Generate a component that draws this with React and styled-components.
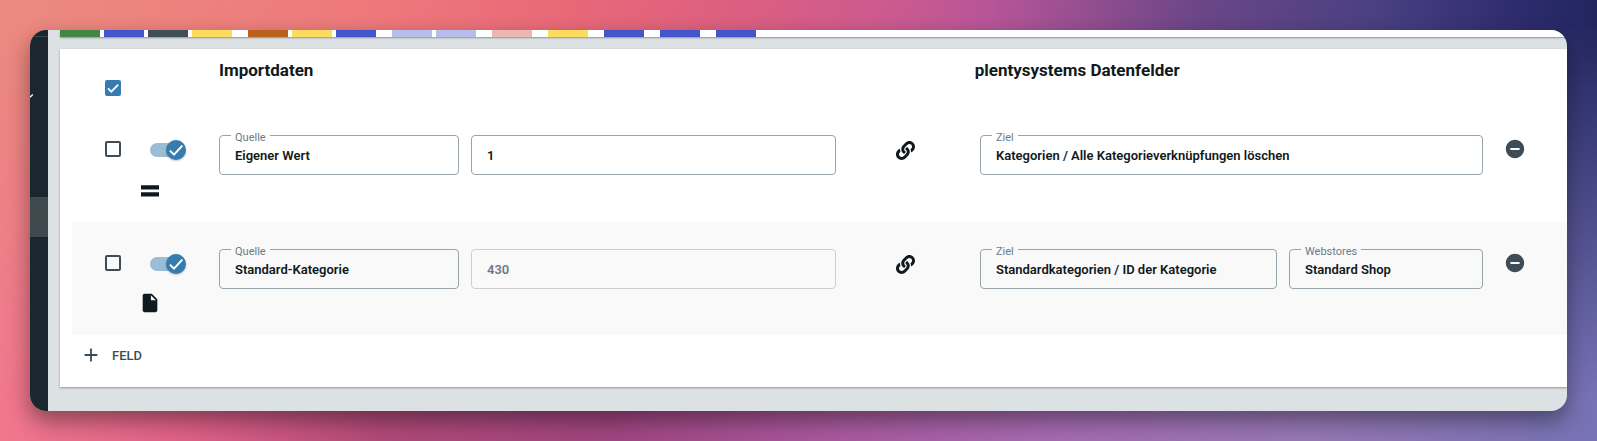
import React, { useState } from 'react'
import styled, { createGlobalStyle } from 'styled-components'
import { FaLink } from 'react-icons/fa'
import { MdAdd, MdInsertDriveFile, MdRemoveCircle } from 'react-icons/md'

const colors = {
  text: '#0f1a20',
  muted: '#6b7b84',
  icon: '#3f4c55',
  blue: '#367cae',
  track: '#9abdd6',
  border: '#98a4ac',
  borderDisabled: '#c8cfd3',
  surface: '#dce1e3',
}

const GlobalStyle = createGlobalStyle`
  * {
    box-sizing: border-box;
  }

  body {
    margin: 0;
    font-family: Roboto, 'Liberation Sans', sans-serif;
    color: ${colors.text};
  }
`

const Backdrop = styled.div`
  position: relative;
  isolation: isolate;
  min-height: 100vh;
  padding: 30px;
  background: linear-gradient(
    90deg,
    #ec8a80 0%,
    #ee7a7b 22%,
    #e86878 36%,
    #dc5f80 46%,
    #cb5a90 56%,
    #b75598 62%,
    #6b4687 75%,
    #4a4082 86%,
    #2e2c6e 95%,
    #21265f 100%
  );

  /* second gradient, faded in towards the bottom edge */
  &::before {
    content: '';
    position: absolute;
    inset: 0;
    z-index: -1;
    background: linear-gradient(
      90deg,
      #f0788d 0%,
      #df6088 12%,
      #b04a78 24%,
      #a04580 38%,
      #a95a9f 53%,
      #a56bb0 66%,
      #9678b4 82%,
      #7672b4 100%
    );
    mask-image: linear-gradient(180deg, transparent 5%, #000 90%);
  }
`

const Window = styled.div`
  display: flex;
  overflow: hidden;
  border-radius: 16px;
  background: ${colors.surface};
  box-shadow: 0 10px 22px rgba(0, 0, 0, 0.4);
`

const Sidebar = styled.nav`
  display: flex;
  flex-direction: column;
  flex: 0 0 18px;
  background: #1b272e;
`

const SidebarTop = styled.div`
  height: 7px;
  border-bottom: 1px solid #3b464c;
`

const SidebarGroup = styled.div`
  height: 160px;
  padding-top: 57px;

  & svg {
    display: block;
  }
`

const SidebarActive = styled.div`
  height: 40px;
  background: #3f494e;
`

const Main = styled.main`
  flex: 1;
  min-width: 0;
  padding: 0 0 24px 12px;
`

const ChipBar = styled.div`
  display: flex;
  gap: 16px;
  height: 7px;
  margin-bottom: 12px;
  background: #fff;
  box-shadow: 0 1px 2px rgba(0, 0, 0, 0.35);
`

const ChipGroup = styled.div`
  display: flex;
  gap: 4px;
`

const Chip = styled.span`
  width: 40px;
  background: ${props => props.$color};
`

const Card = styled.section`
  padding: 0 0 12px 12px;
  background: #fff;
  box-shadow: 0 1px 2px rgba(0, 0, 0, 0.35);
`

const Header = styled.header`
  display: grid;
  grid-template-columns: 36px 78px 614fr 139px 506fr 84px;
  height: 59px;
  padding: 11px 0 0 33px;
`

const HeaderCheck = styled.div`
  padding-top: 20px;
`

const Title = styled.h2`
  margin: 0;
  font-size: 17px;
  line-height: 20px;
  font-weight: 700;
  white-space: nowrap;
`

const Row = styled.div`
  display: grid;
  grid-template-columns: 36px 78px 617fr 144px 503fr 84px;
  height: ${props => (props.$shaded ? 113 : 114)}px;
  padding: 27px 0 0 33px;
  background: ${props => (props.$shaded ? '#f9f9f9' : '#fff')};
`

const RowCheck = styled.div`
  padding-top: 6px;
`

const Status = styled.div`
  display: flex;
  flex-direction: column;
  gap: 20px;
  padding-top: 5px;
`

const ToggleSlot = styled.div`
  padding-left: 9px;
`

const TypeIcon = styled.div`
  display: flex;
  align-items: center;
  justify-content: center;
  width: 18px;
  height: ${props => (props.$type === 'value' ? 22 : 18)}px;

  & svg {
    flex: none;
  }
`

const CheckLabel = styled.label`
  display: grid;
  width: 16px;
  height: 16px;

  & > * {
    grid-area: 1 / 1;
  }

  & svg {
    pointer-events: none;
  }
`

const CheckInput = styled.input`
  appearance: none;
  width: 16px;
  height: 16px;
  margin: 0;
  border: 2px solid ${colors.icon};
  border-radius: 2px;
  cursor: pointer;

  &:checked {
    border-color: ${colors.blue};
    background: ${colors.blue};
  }
`

const ToggleLabel = styled.label`
  display: grid;
  align-items: center;
  width: 36px;
  height: 20px;

  & > * {
    grid-area: 1 / 1;
  }
`

const ToggleInput = styled.input`
  appearance: none;
  width: 34px;
  height: 14px;
  margin: 0;
  border-radius: 7px;
  background: ${colors.borderDisabled};
  cursor: pointer;

  &:checked {
    background: ${colors.track};
  }
`

const Knob = styled.span`
  display: flex;
  align-items: center;
  justify-content: center;
  justify-self: ${props => (props.$on ? 'end' : 'start')};
  width: 20px;
  height: 20px;
  border-radius: 50%;
  background: ${props => (props.$on ? colors.blue : '#fff')};
  box-shadow: 0 1px 2px rgba(0, 0, 0, 0.25);
  pointer-events: none;
`

const Fields = styled.div`
  display: flex;
  gap: 12px;
`

const FieldBox = styled.div`
  position: relative;
  flex: ${props => props.$grow} 1 0;
  min-width: 0;
`

const FieldLabel = styled.label`
  position: absolute;
  top: -4px;
  left: 12px;
  padding: 0 4px;
  background: ${props => (props.$shaded ? '#f9f9f9' : '#fff')};
  color: ${colors.muted};
  font-size: 11px;
  line-height: 14px;
`

const FieldInput = styled.input`
  display: block;
  width: 100%;
  height: 40px;
  padding: 0 15px;
  border: 1px solid ${colors.border};
  border-radius: 4px;
  background: transparent;
  color: ${colors.text};
  font-family: inherit;
  font-size: 13px;
  font-weight: 600;

  &:disabled {
    border-color: ${colors.borderDisabled};
    color: ${colors.muted};
  }
`

const LinkSlot = styled.div`
  display: flex;
  justify-content: center;
  padding: 6px 6px 0 0;
`

const RemoveButton = styled.button`
  align-self: start;
  width: 22px;
  height: 22px;
  margin: 3px 0 0 21px;
  padding: 0;
  border: 0;
  background: none;
  color: ${colors.icon};
  cursor: pointer;
`

const AddButton = styled.button`
  display: flex;
  align-items: center;
  gap: 10px;
  height: 40px;
  padding: 0 8px;
  border: 0;
  background: none;
  color: ${colors.icon};
  font-family: inherit;
  font-size: 13px;
  font-weight: 500;
  cursor: pointer;
`

const chips = [
  ['#448744', '#4355cb', '#404e57', '#fbdb60'],
  ['#b9621b', '#fbdb60', '#4355cb'],
  ['#b7bdeb', '#b7bdeb'],
  ['#ebb7b5'],
  ['#fbdb60'],
  ['#4355cb'],
  ['#4355cb'],
  ['#4355cb'],
]

const mappings = [
  {
    id: 'own',
    type: 'value',
    source: [
      { label: 'Quelle', value: 'Eigener Wert', grow: 240 },
      { name: 'Wert', value: '1', grow: 365 },
    ],
    target: [{ label: 'Ziel', value: 'Kategorien / Alle Kategorieverknüpfungen löschen', grow: 1 }],
  },
  {
    id: 'category',
    type: 'file',
    shaded: true,
    source: [
      { label: 'Quelle', value: 'Standard-Kategorie', grow: 240 },
      { name: 'Wert', value: '430', grow: 365, disabled: true },
    ],
    target: [
      { label: 'Ziel', value: 'Standardkategorien / ID der Kategorie', grow: 297 },
      { label: 'Webstores', value: 'Standard Shop', grow: 194 },
    ],
  },
]

const Checkbox = ({ label, defaultChecked = false }) => {
  const [checked, setChecked] = useState(defaultChecked)
  return (
    <CheckLabel>
      <CheckInput
        type="checkbox"
        aria-label={label}
        checked={checked}
        onChange={e => setChecked(e.target.checked)}
      />
      {checked && (
        <svg width="16" height="16" viewBox="0 0 16 16" fill="none">
          <path d="M3 8.4 6.3 11.7 13.2 4.6" stroke="#fff" strokeWidth="1.7" />
        </svg>
      )}
    </CheckLabel>
  )
}

const Toggle = ({ label }) => {
  const [on, setOn] = useState(true)
  return (
    <ToggleLabel>
      <ToggleInput
        type="checkbox"
        role="switch"
        aria-label={label}
        checked={on}
        onChange={e => setOn(e.target.checked)}
      />
      <Knob $on={on}>
        {on && (
          <svg width="20" height="20" viewBox="0 0 20 20" fill="none">
            <path d="M3.9 10.6 8 14.6 16.3 5.6" stroke="#fff" strokeWidth="2" />
          </svg>
        )}
      </Knob>
    </ToggleLabel>
  )
}

const EqualsIcon = () => (
  <svg width="18" height="12" viewBox="0 0 18 12" fill={colors.text}>
    <path d="M0 .3h18v4.2H0zM0 7.3h18v4.2H0z" />
  </svg>
)

const renderFields = (fields, row) =>
  fields.map((field, i) => {
    const id = `${row.id}-${field.label || field.name}-${i}`
    return (
      <FieldBox key={id} $grow={field.grow}>
        <FieldInput
          id={id}
          type="text"
          aria-label={field.label ? undefined : field.name}
          defaultValue={field.value}
          disabled={field.disabled}
        />
        {field.label && (
          <FieldLabel htmlFor={id} $shaded={row.shaded}>
            {field.label}
          </FieldLabel>
        )}
      </FieldBox>
    )
  })

const MappingRow = ({ row }) => (
  <Row $shaded={row.shaded}>
    <RowCheck>
      <Checkbox label="Zeile auswählen" />
    </RowCheck>
    <Status>
      <ToggleSlot>
        <Toggle label="Aktiv" />
      </ToggleSlot>
      <TypeIcon $type={row.type}>
        {row.type === 'value' ? <EqualsIcon /> : <MdInsertDriveFile size={22} color={colors.text} />}
      </TypeIcon>
    </Status>
    <Fields>{renderFields(row.source, row)}</Fields>
    <LinkSlot>
      <FaLink size={19} color={colors.text} />
    </LinkSlot>
    <Fields>{renderFields(row.target, row)}</Fields>
    <RemoveButton type="button" aria-label="Feld entfernen">
      <MdRemoveCircle size={22} />
    </RemoveButton>
  </Row>
)

const App = () => (
  <>
    <GlobalStyle />
    <Backdrop>
      <Window>
        <Sidebar>
          <SidebarTop />
          <SidebarGroup>
            <svg width="4" height="5" viewBox="0 0 4 5" fill="none">
              <path d="M0 3.2 2.8.6" stroke="#fff" strokeWidth="1.3" />
            </svg>
          </SidebarGroup>
          <SidebarActive />
        </Sidebar>
        <Main>
          <ChipBar>
            {chips.map((group, i) => (
              <ChipGroup key={i + '-group'}>
                {group.map((color, j) => (
                  <Chip key={j + '-chip'} $color={color} />
                ))}
              </ChipGroup>
            ))}
          </ChipBar>
          <Card>
            <Header>
              <HeaderCheck>
                <Checkbox label="Alle auswählen" defaultChecked />
              </HeaderCheck>
              <span />
              <Title>Importdaten</Title>
              <span />
              <Title>plentysystems Datenfelder</Title>
            </Header>
            {mappings.map(row => (
              <MappingRow key={row.id} row={row} />
            ))}
            <AddButton type="button">
              <MdAdd size={22} />
              FELD
            </AddButton>
          </Card>
        </Main>
      </Window>
    </Backdrop>
  </>
)

export default App
